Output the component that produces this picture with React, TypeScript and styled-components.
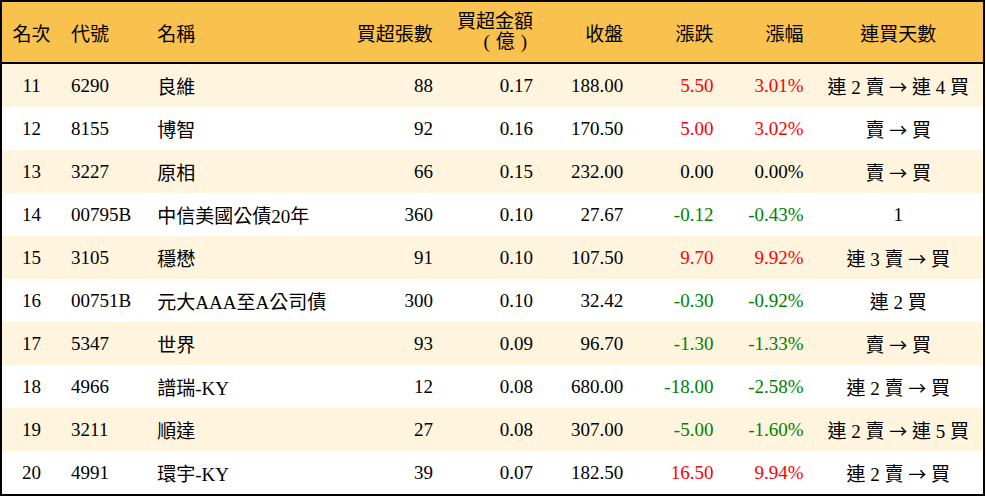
import React from 'react';
import styled, {createGlobalStyle} from 'styled-components';

const GlobalStyle = createGlobalStyle`
  html, body {
    margin: 0;
    padding: 0;
    background: #ffffff;
  }
  body {
    font-family: "Liberation Serif", "Noto Sans CJK TC", serif;
    color: #000000;
  }
`;

type Align = 'left' | 'right' | 'center';
type Tone = 'up' | 'down' | 'flat';

interface IColumn {
  title: React.ReactNode;
  width: number;
  align: Align;
}

interface IRow {
  rank: number;
  code: string;
  name: string;
  lots: number;
  amount: string;
  close: string;
  change: string;
  pct: string;
  streak: string;
}

const TitleLine = styled.span`
  display: block;
  line-height: 20px;
`;

const UnitLine = styled(TitleLine)`
  letter-spacing: 6px;
`;

const columns: IColumn[] = [
  {title: '名次', width: 60, align: 'center'},
  {title: '代號', width: 86, align: 'left'},
  {title: '名稱', width: 195, align: 'left'},
  {title: '買超張數', width: 100, align: 'right'},
  {title: <><TitleLine>買超金額</TitleLine><UnitLine>(億)</UnitLine></>, width: 100, align: 'right'},
  {title: '收盤', width: 90, align: 'right'},
  {title: '漲跌', width: 90, align: 'right'},
  {title: '漲幅', width: 90, align: 'right'},
  {title: '連買天數', width: 170, align: 'center'},
];

const rows: IRow[] = [
  {rank: 11, code: '6290', name: '良維', lots: 88, amount: '0.17', close: '188.00', change: '5.50', pct: '3.01%', streak: '連 2 賣 → 連 4 買'},
  {rank: 12, code: '8155', name: '博智', lots: 92, amount: '0.16', close: '170.50', change: '5.00', pct: '3.02%', streak: '賣 → 買'},
  {rank: 13, code: '3227', name: '原相', lots: 66, amount: '0.15', close: '232.00', change: '0.00', pct: '0.00%', streak: '賣 → 買'},
  {rank: 14, code: '00795B', name: '中信美國公債20年', lots: 360, amount: '0.10', close: '27.67', change: '-0.12', pct: '-0.43%', streak: '1'},
  {rank: 15, code: '3105', name: '穩懋', lots: 91, amount: '0.10', close: '107.50', change: '9.70', pct: '9.92%', streak: '連 3 賣 → 買'},
  {rank: 16, code: '00751B', name: '元大AAA至A公司債', lots: 300, amount: '0.10', close: '32.42', change: '-0.30', pct: '-0.92%', streak: '連 2 買'},
  {rank: 17, code: '5347', name: '世界', lots: 93, amount: '0.09', close: '96.70', change: '-1.30', pct: '-1.33%', streak: '賣 → 買'},
  {rank: 18, code: '4966', name: '譜瑞-KY', lots: 12, amount: '0.08', close: '680.00', change: '-18.00', pct: '-2.58%', streak: '連 2 賣 → 買'},
  {rank: 19, code: '3211', name: '順達', lots: 27, amount: '0.08', close: '307.00', change: '-5.00', pct: '-1.60%', streak: '連 2 賣 → 連 5 買'},
  {rank: 20, code: '4991', name: '環宇-KY', lots: 39, amount: '0.07', close: '182.50', change: '16.50', pct: '9.94%', streak: '連 2 賣 → 買'},
];

const toneColors: Record<Tone, string> = {
  up: '#ff0000',
  down: '#008000',
  flat: '#000000',
};

const getTone = (value: string): Tone => {
  const num = parseFloat(value);
  if (num > 0) return 'up';
  if (num < 0) return 'down';
  return 'flat';
};

const Table = styled.table`
  width: 985px;
  table-layout: fixed;
  border-collapse: collapse;
  border: 2px solid #000000;
  font-size: 19px;
`;

const HeadRow = styled.tr`
  background-color: #f9c14d;
`;

interface CellProps {
  readonly $align: Align;
}

const HeadCell = styled.th<CellProps>`
  height: 60px;
  padding: 0 10px;
  font-weight: 400;
  text-align: ${props => props.$align};
  vertical-align: middle;
  border-bottom: 2px solid #000000;
`;

interface RowProps {
  readonly $striped: boolean;
}

const Row = styled.tr<RowProps>`
  background-color: ${props => (props.$striped ? '#fff5df' : '#ffffff')};
`;

interface DataCellProps extends CellProps {
  readonly $tone?: Tone;
}

const Cell = styled.td<DataCellProps>`
  height: 43px;
  padding: 0 10px;
  text-align: ${props => props.$align};
  vertical-align: middle;
  white-space: nowrap;
  color: ${props => toneColors[props.$tone || 'flat']};
`;

const Arrow = styled.span`
  font-family: "Noto Sans CJK TC", sans-serif;
  font-size: 18px;
`;

const renderStreak = (text: string) =>
  text.split('→').map((part, i, all) => (
    <React.Fragment key={i}>
      {part}
      {i < all.length - 1 && <Arrow>→</Arrow>}
    </React.Fragment>
  ));

const App: React.FC = () => {
  return (
    <>
      <GlobalStyle />
      <Table>
        <colgroup>
          {columns.map((col, i) => (
            <col key={i} style={{width: col.width}} />
          ))}
        </colgroup>
        <thead>
          <HeadRow>
            {columns.map((col, i) => (
              <HeadCell key={i} $align={col.align}>{col.title}</HeadCell>
            ))}
          </HeadRow>
        </thead>
        <tbody>
          {rows.map((row, i) => {
            const tone = getTone(row.change);
            return (
              <Row key={row.rank} $striped={i % 2 === 0}>
                <Cell $align="center">{row.rank}</Cell>
                <Cell $align="left">{row.code}</Cell>
                <Cell $align="left">{row.name}</Cell>
                <Cell $align="right">{row.lots}</Cell>
                <Cell $align="right">{row.amount}</Cell>
                <Cell $align="right">{row.close}</Cell>
                <Cell $align="right" $tone={tone}>{row.change}</Cell>
                <Cell $align="right" $tone={tone}>{row.pct}</Cell>
                <Cell $align="center">{renderStreak(row.streak)}</Cell>
              </Row>
            );
          })}
        </tbody>
      </Table>
    </>
  );
};

export default App;
